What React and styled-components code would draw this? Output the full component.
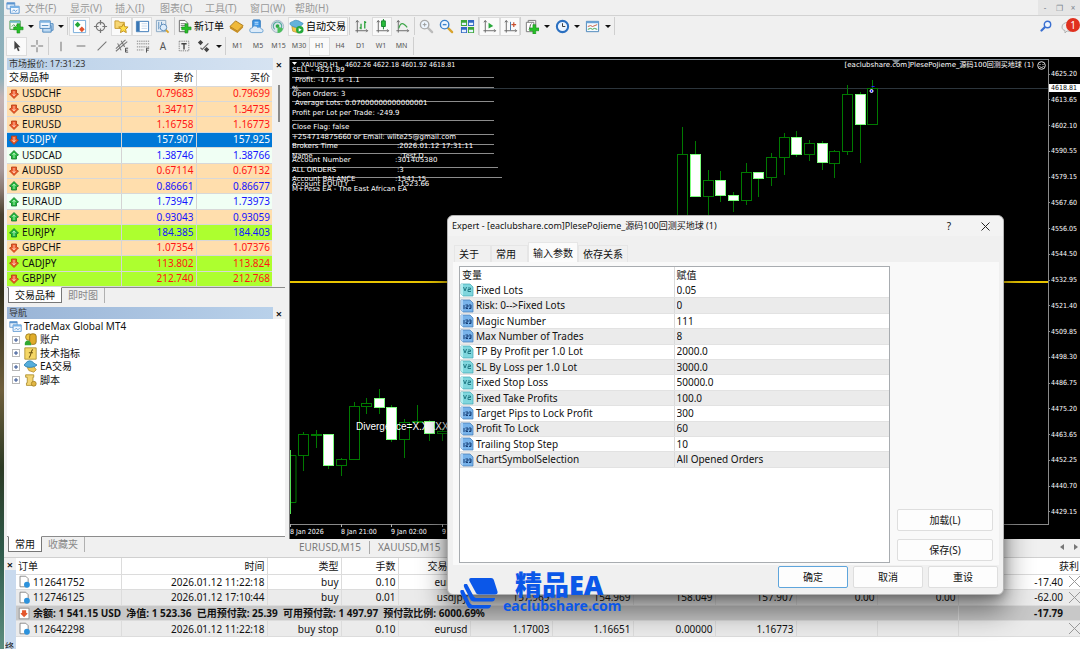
import styled, { createGlobalStyle, css } from "styled-components";

const GlobalStyle = createGlobalStyle`
  * {
    box-sizing: border-box;
  }
  body {
    margin: 0;
    overflow: hidden;
    font-family: "Noto Sans", "Noto Sans CJK SC", sans-serif;
    font-size: 10px;
    line-height: 14px;
    color: #111;
  }
  button, input {
    font: inherit;
    color: inherit;
    margin: 0;
  }
  table {
    border-collapse: collapse;
    table-layout: fixed;
  }
  th, td {
    padding: 0;
    font-weight: 400;
    white-space: nowrap;
    overflow: hidden;
  }
  th {
    height: 16px;
  }
`;

const Desktop = styled.div`
  display: flex;
  position: relative;
  height: 100vh;
  overflow: hidden;
`;

const Wallpaper = styled.div`
  width: 4px;
  flex: none;
  background: linear-gradient(
    #8cb0bb 0%,
    #8fb2bc 12%,
    #c3b3b4 15%,
    #a79a9c 26%,
    #8c7c74 29%,
    #4a4231 33%,
    #33301c 45%,
    #6f5f3c 60%,
    #2c3a24 72%,
    #2e5a4a 85%,
    #5d8e80 100%
  );
`;

const Terminal = styled.main`
  flex: 1;
  min-width: 0;
  display: flex;
  flex-direction: column;
  background: #f0f0f0;
`;

const MenuBar = styled.nav`
  display: flex;
  align-items: center;
  height: 16px;
  padding-left: 2px;
  border-bottom: 1px solid #d2d2d2;
  color: #999;
`;

const Menu = styled.button`
  padding: 0;
  margin-left: 14px;
  width: 31px;
  border: 0;
  background: none;
  white-space: nowrap;
  text-align: left;
  &:first-of-type {
    margin-left: 5px;
  }
`;

const MdiButtons = styled.div`
  display: flex;
  margin-left: auto;
  background: #e5e5e5;
`;

const MdiButton = styled.button`
  width: 14px;
  height: 15px;
  padding: 0;
  border: 0;
  background: none;
  font-size: 8px;
  color: #7d8790;
`;

const Bar = styled.div`
  display: flex;
  align-items: center;
  height: 20px;
  padding-left: 2px;
`;

const barButton = css`
  border: 0;
  background: none;
  padding: 0;
  display: flex;
  align-items: center;
  justify-content: center;
  flex: none;
  height: 19px;
  ${({ $pressed }) =>
    $pressed &&
    css`
      background: #fafafa;
      box-shadow: inset 0 0 0 1px #dcdcdc;
    `}
`;

const Tool = styled.button`
  ${barButton}
  width: ${({ $width }) => $width || 21}px;
  color: #555;
`;

const TextTool = styled.button`
  ${barButton}
  gap: 2px;
  padding: 0 2px 0 1px;
  white-space: nowrap;
  color: #000;
`;

const Period = styled.button`
  ${barButton}
  width: ${({ $wide }) => ($wide ? 21 : 20)}px;
  font-size: 7px;
  color: #555;
`;

const Caret = styled.button`
  ${barButton}
  width: 10px;
  &:before {
    content: "";
    border: 3px solid transparent;
    border-top-color: #111;
    border-bottom: 0;
  }
`;

const Divider = styled.span`
  width: 1px;
  height: 18px;
  margin: 0 ${({ $tight }) => ($tight ? 0 : 1)}px;
  background: #cfcfcf;
`;

const BarEnd = styled.div`
  display: flex;
  align-items: center;
  gap: 9px;
  margin-left: auto;
`;

const Alerts = styled.button`
  position: relative;
  width: 19px;
  height: 20px;
  padding: 5px 0 0 0;
  border: 0;
  background: none;
  text-align: left;
`;

const Badge = styled.span`
  position: absolute;
  top: 2px;
  right: 0;
  width: 14px;
  height: 14px;
  border-radius: 50%;
  background: #e0301e;
  color: #fff;
  font-size: 10px;
  line-height: 14px;
  text-align: center;
`;

const Workspace = styled.div`
  display: flex;
  flex: 1;
  min-height: 0;
`;

const SideColumn = styled.aside`
  width: 285px;
  flex: none;
  display: flex;
  flex-direction: column;
  padding: 2px 4px 4px 3px;
  gap: 3px;
`;

const Panel = styled.section`
  display: flex;
  flex-direction: column;
  flex: ${({ $grow }) => ($grow ? 1 : "none")};
  min-height: 0;
`;

const PanelTitle = styled.h2`
  display: flex;
  justify-content: space-between;
  margin: 0;
  height: 12px;
  font-size: 9px;
  line-height: 12px;
  font-weight: 400;
  span {
    width: 266px;
    padding-left: 2px;
    background: linear-gradient(90deg, ${({ $from }) => $from}, ${({ $to }) => $to});
    color: #333;
  }
`;

const Close = styled.button`
  border: 0;
  padding: 0;
  width: 12px;
  height: 12px;
  background: none;
  font-size: 11px;
  font-weight: 600;
  line-height: 11px;
`;

const Scroller = styled.div`
  display: flex;
  justify-content: space-between;
  border-bottom: 1px solid #8c8c8c;
`;

const Thumb = styled.div`
  width: 2px;
  height: 37px;
  margin: 15px 5px 0 0;
  background: #8b8b8b;
`;

const QuoteTable = styled.table`
  width: 265px;
  height: 217px;
  background: #fff;
  th,
  td {
    text-align: right;
    padding-right: 2px;
    border-right: 1px solid #d4d4d4;
    border-bottom: 1px solid #d8d8d8;
    line-height: 13px;
  }
  th:first-child {
    text-align: left;
    padding-left: 2px;
  }
  th:last-child,
  td:last-child {
    border-right: 0;
  }
`;

const tones = { peach: "#ffdead", mint: "#f0fff4", lime: "#adff2f", blue: "#0078d7" };

const QuoteRow = styled.tr`
  background: ${({ $tone }) => tones[$tone]};
  td {
    color: ${({ $up, $tone }) =>
      $tone === "blue" ? "#fff" : $up ? "#1414ff" : "#ff1414"};
  }
  td:first-child {
    color: ${({ $tone }) => ($tone === "blue" ? "#fff" : "#111")};
    text-align: left;
    padding-left: 2px;
  }
`;

const Cell = styled.span`
  display: flex;
  align-items: center;
  gap: ${({ $gap }) => $gap || 3}px;
`;

const PanelTabs = styled.div`
  display: flex;
  height: 16px;
`;

const PanelTab = styled.button`
  padding: 0 6px;
  height: 15px;
  line-height: 13px;
  border: 0;
  background: none;
  color: #888;
  border-right: 1px solid #b0b0b0;
  ${({ $active }) =>
    $active &&
    css`
      margin-left: 1px;
      background: #fff;
      color: #111;
      border: 1px solid #777;
      border-top-color: #fff;
      margin-top: -1px;
      height: 16px;
    `}
`;

const Tree = styled.div`
  flex: 1;
  padding: 0 2px;
  background: #fff;
  border-bottom: 1px solid #8c8c8c;
`;

const TreeRoot = styled.div`
  display: flex;
  align-items: center;
  gap: 2px;
  height: 14px;
`;

const TreeList = styled.ul`
  list-style: none;
  margin: 0;
  padding: 0 0 0 3px;
  height: 54px;
  display: flex;
  flex-direction: column;
  li {
    flex: 1;
    display: flex;
    align-items: center;
    gap: 3px;
    line-height: 13px;
  }
`;

const Expander = styled.button`
  width: 8px;
  height: 8px;
  padding: 0;
  border: 1px solid #b8b8b8;
  background: #fff;
  display: flex;
  margin-right: 1px;
`;

const ChartColumn = styled.section`
  flex: 1;
  min-width: 0;
  display: flex;
  flex-direction: column;
`;

const ChartWindow = styled.div`
  flex: 1;
  min-height: 0;
  display: flex;
  position: relative;
  margin-top: 1px;
  padding-top: 2px;
  background: #000;
  border-left: 1px solid #777;
  color: #fff;
  font-family: "DejaVu Sans Condensed", "Noto Sans CJK SC", sans-serif;
  font-size: 7px;
  line-height: 8px;
`;

const Plot = styled.div`
  flex: 1;
  min-width: 0;
  border-top: 1px solid #7e8890;
  border-right: 1px solid #8a8a8a;
  border-bottom: 1px solid #8a8a8a;
  margin-bottom: 14px;
  position: relative;
`;

const Canvas = styled.svg`
  display: block;
  width: 100%;
  height: 100%;
  overflow: visible;
  fill: #fff;
`;

const Comments = styled.g`
  font-family: "DejaVu Sans", sans-serif;
`;

const ExpertName = styled.div`
  position: absolute;
  top: 0;
  right: 2px;
  display: flex;
  align-items: center;
  gap: 3px;
  height: 10px;
  font-family: "DejaVu Sans", "Noto Sans CJK SC", sans-serif;
`;

const PriceAxis = styled.ol`
  width: 31px;
  flex: none;
  list-style: none;
  margin: 0;
  padding: 11px 0 23px 0;
  display: flex;
  flex-direction: column;
  justify-content: space-between;
  li {
    display: flex;
    align-items: center;
    gap: 1px;
  }
  li:before {
    content: "";
    width: 1px;
    height: 1px;
    background: #8a8a8a;
  }
`;

const LastPrice = styled.output`
  position: absolute;
  top: 27px;
  right: 0;
  width: 31px;
  padding: 0 2px;
  background: #fff;
  color: #000;
`;

const ChartTabs = styled.div`
  display: flex;
  align-items: center;
  height: 18px;
  padding: 0 0 2px 2px;
  color: #7a7a7a;
`;

const ChartTab = styled.button`
  border: 0;
  border-right: 1px solid #aaa;
  padding: 0 8px;
  height: 13px;
  line-height: 13px;
  background: none;
  &:last-of-type {
    border-right: 0;
  }
`;

const Arrows = styled.span`
  display: flex;
  gap: 10px;
  margin: 0 2px 0 auto;
`;

const TradePanel = styled.section`
  display: flex;
  height: 92px;
  flex: none;
  background: #fff;
  border-top: 1px solid #d0d0d0;
`;

const Rail = styled.div`
  width: 12px;
  flex: none;
  display: flex;
  flex-direction: column;
  background: #f0f0f0;
  span {
    flex: 1;
    margin-left: 1px;
    padding-top: 72px;
    background: #c9daee;
    font-size: 9px;
    line-height: 10px;
    overflow: hidden;
  }
`;

const OrderWrap = styled.div`
  flex: 1;
  min-width: 0;
`;

const OrderTable = styled.table`
  width: 100%;
  height: 79px;
  th,
  td {
    text-align: right;
    padding-right: 2px;
    border-right: 1px solid #dcdcdc;
    border-bottom: 1px solid #dcdcdc;
  }
  th:first-child,
  td:first-child {
    text-align: left;
    padding-left: 2px;
  }
  td:nth-last-child(-n + 2),
  th:last-child {
    border-right: 0;
  }
  th:last-child {
    padding-right: 1px;
  }
`;

const OrderRow = styled.tr`
  background: ${({ $shade }) => $shade || "#fff"};
  font-weight: ${({ $bold }) => ($bold ? 700 : 400)};
  td:nth-last-child(2) {
    padding-right: 3px;
  }
  td {
    font-weight: inherit;
  }
  td:last-child {
    padding-right: 0;
  }
`;

const CloseOrder = styled.button`
  display: flex;
  margin-left: auto;
  padding: 0;
  border: 0;
  background: none;
`;

const Dialog = styled.section`
  position: absolute;
  left: 447px;
  top: 215px;
  width: 557px;
  display: flex;
  flex-direction: column;
  background: #f0f0f0;
  border: 1px solid #b4b4b4;
  border-radius: 6px;
  box-shadow: 0 14px 28px 2px rgba(0, 0, 0, 0.45), 0 2px 10px rgba(0, 0, 0, 0.3);
`;

const DialogTitle = styled.header`
  display: flex;
  align-items: center;
  height: 20px;
  padding: 0 12px 0 4px;
  background: #f3f3f3;
  border-radius: 6px 6px 0 0;
  h1 {
    flex: 1;
    margin: 0;
    font-size: 9px;
    font-weight: 400;
  }
`;

const TitleButton = styled.button`
  display: flex;
  align-items: center;
  justify-content: center;
  width: 12px;
  margin-left: 24px;
  padding: 0;
  border: 0;
  background: none;
`;

const DialogTabs = styled.div`
  display: flex;
  align-items: flex-end;
  height: 26px;
  padding-left: 6px;
`;

const DialogTab = styled.button`
  padding: 0 4px;
  min-width: 37px;
  height: ${({ $active }) => ($active ? 20 : 17)}px;
  border: 1px solid #e6e6e6;
  border-bottom: 0;
  text-align: left;
  background: ${({ $active }) => ($active ? "#fbfbfb" : "#f0f0f0")};
`;

const DialogBody = styled.div`
  display: flex;
  gap: 7px;
  margin: 0 4px 0 5px;
  padding: 4px 6px 2px 6px;
  background: #f9f9f9;
`;

const InputFrame = styled.div`
  flex: 1;
  height: 297px;
  background: #fff;
  border: 1px solid #a8acb0;
`;

const InputTable = styled.table`
  width: 100%;
  height: 201px;
  th,
  td {
    text-align: left;
    line-height: 13px;
    padding-left: 2px;
  }
  th:first-child,
  td:first-child {
    padding-left: 0;
    border-right: 1px solid #dadada;
  }
  th:first-child {
    padding-left: 2px;
  }
  td {
    border-bottom: 1px solid #e2e2e2;
  }
  tbody tr:nth-child(even) {
    background: #ebebeb;
  }
`;

const ValueInput = styled.input`
  display: block;
  width: 100%;
  height: 13px;
  padding: 0;
  border: 0;
  background: none;
`;

const SideActions = styled.div`
  display: flex;
  flex-direction: column;
  justify-content: flex-end;
  gap: 8px;
  width: 96px;
  padding-bottom: 2px;
`;

const Action = styled.button`
  min-width: 70px;
  height: 22px;
  padding: 0;
  border: 1px solid ${({ $primary }) => ($primary ? "#5ea5dc" : "#dedede")};
  border-radius: 2px;
  background: #fdfdfd;
`;

const DialogFooter = styled.footer`
  display: flex;
  justify-content: flex-end;
  gap: 5px;
  padding: 1px 5px 6px;
`;

const Brand = styled.div`
  position: absolute;
  left: 460px;
  top: 571px;
  display: flex;
  align-items: center;
  gap: 5px;
  color: #0b57e8;
  font-weight: 700;
  font-size: 14px;
  line-height: 14px;
  svg {
    margin-top: 2px;
  }
  strong {
    display: block;
    padding-left: 12px;
    font-size: 27px;
    line-height: 28px;
  }
`;

const Svg = ({ size = 15, children }) => (
  <svg width={size} height={size} viewBox="0 0 16 16" fill="none">
    {children}
  </svg>
);

const Plus = ({ x = 5, y = 5 }) => (
  <path
    transform={`translate(${x} ${y})`}
    d="M3.500 0h3v3.500H10v3H6.500V10h-3V6.500H0v-3h3.500z"
    fill="#27c027"
    stroke="#128a16"
    strokeWidth=".6"
  />
);

const Lens = ({ stroke, children }) => (
  <Svg>
    <path d="m9.500 9.500 4.500 4.500" stroke={stroke === "#aaa" ? "#bbb" : "#d9a32c"} strokeWidth="2.400" strokeLinecap="round" />
    <circle cx="6" cy="6" r="4.500" fill="#eef6ff" stroke={stroke} strokeWidth="1.500" />
    {children}
  </Svg>
);

const Axes = ({ children }) => (
  <Svg>
    <path d="M3.500 2v12.500M1.500 12.500h13M2 3.500 3.500 1.500 5 3.500M13 11l1.500 1.500L13 14" stroke="#666" />
    {children}
  </Svg>
);

const WindowsIcon = ({ size }) => (
  <Svg size={size}>
    <path d="M1 2h9v7H1z" fill="#e6f1fc" stroke="#5a94cf" />
    <path d="M1 2h9v2H1z" fill="#5a94cf" />
    <path d="M5 6h10v8H5z" fill="#f2f8ff" stroke="#4c8ccb" />
    <path d="M5 6h10v2H5z" fill="#78b2e6" />
    <path d="m7 12 2-2 2 2 2-2" stroke="#4c8ccb" />
  </Svg>
);

const NewChartIcon = () => (
  <Svg>
    <path d="M1 2h11v9H1z" fill="#f4faf4" stroke="#4b9a4b" />
    <path d="M1 2h11v2H1z" fill="#6db7c7" />
    <path d="m3 8 2-2 2 2 2-2" stroke="#4b9a4b" />
    <Plus />
  </Svg>
);

const ProfilesIcon = () => (
  <Svg>
    <path d="M6 5h9v7H6z" fill="#bcd9f3" stroke="#4c86bd" />
    <path d="M4 7h9v7H4z" fill="#bcd9f3" stroke="#4c86bd" />
    <path d="M1 2h11v8H1z" fill="#eff7ff" stroke="#4c86bd" />
    <path d="M1 2h11v2H1z" fill="#7fb4e2" />
    <path d="M3 7h7" stroke="#4c86bd" />
  </Svg>
);

const MarketIcon = () => (
  <Svg>
    <path d="M1.500 1.500h13v13h-13z" fill="#fff" stroke="#72a9d8" />
    <path d="m6 3 3 3-3 3-3-3z" fill="#22a736" />
    <path d="m10.500 8 3 3-3 3-3-3z" fill="#e2522b" />
  </Svg>
);

const TargetIcon = () => (
  <Svg>
    <circle cx="8" cy="8" r="4.500" stroke="#777" strokeWidth="1.300" />
    <path d="M8 1v5M8 10v5M1 8h5M10 8h5" stroke="#777" strokeWidth="1.300" />
  </Svg>
);

const star = "m10 5 1.500 3.200 3.500.4-2.600 2.400.7 3.500-3.100-1.700-3.100 1.700.7-3.500L5 8.600l3.500-.4z";

const FavoritesIcon = () => (
  <Svg>
    <path d="M1 2h4l1 1.500h5V10H1z" fill="#f7d774" stroke="#c89a2c" />
    <path d={star} fill="#ffdf4a" stroke="#bf8f1d" />
  </Svg>
);

const NavigatorIcon = () => (
  <Svg>
    <path d="M1.500 2.500h13v11h-13z" fill="#fff" stroke="#3976b5" />
    <path d="M2 3h3v10H2z" fill="#3976b5" />
    <path d="M7 5h6M7 7.500h6M7 10h6" stroke="#c5d8ec" />
  </Svg>
);

const TesterIcon = () => (
  <Svg>
    <path d="M1.500 1.500h10v12h-10z" fill="#e4edf6" stroke="#8aa7c2" />
    <path d="M4 3v8M7 3v8" stroke="#5b8dbc" />
    <path d="m11 11 3.500 3.500" stroke="#d9a32c" strokeWidth="2" />
    <circle cx="9" cy="9" r="3.500" fill="#dcecfb" stroke="#5989b8" />
  </Svg>
);

const OrderIcon = () => (
  <Svg>
    <path d="M2.500 1.500h6l3 3v9h-9z" fill="#fff" stroke="#666" />
    <path d="M4 5h5M4 7h5M4 9h3" stroke="#777" />
    <Plus />
  </Svg>
);

const BookIcon = () => (
  <Svg>
    <path d="M1 8 7 2l8 5-6 6z" fill="#efb93a" stroke="#a9771a" />
    <path d="m1 8 8 5v2L1 10zM9 13l6-6v2l-6 6z" fill="#c78e22" />
  </Svg>
);

const CloudServerIcon = () => (
  <Svg>
    <rect x="4" y="1" width="8" height="9" rx="1" fill="#3f98e8" stroke="#2873bb" />
    <path d="M6 3.500h4M6 5.500h4" stroke="#cbe7ff" />
    <path d="M3 14.500a2.500 2.500 0 0 1 .5-5 3 3 0 0 1 5.500-.5 3 3 0 0 1 4 1.500 2 2 0 0 1 0 4z" fill="#dcebf9" stroke="#6ca2d2" />
  </Svg>
);

const SignalIcon = () => (
  <Svg>
    <circle cx="8" cy="8" r="6.500" fill="#dbe4ea" stroke="#9fb3c4" />
    <path d="M5 11a4.500 4.500 0 1 1 6 0" stroke="#55a9a0" strokeWidth="1.200" />
    <circle cx="8" cy="7.500" r="2" fill="#2ea745" />
    <path d="M8 8v7c3 0 5-2 6-5z" fill="#4cbf5c" />
  </Svg>
);

const AutoIcon = () => (
  <Svg>
    <path d="m3 8 1 5 6 2 4-6z" fill="#f2c94b" stroke="#b98d22" strokeWidth=".7" />
    <path d="M1 5c0-2 2-1.500 4-3s6 0 7 1 3 1 3 2-5 4-7 4-7-2-7-4z" fill="#63b3dc" stroke="#3787b4" strokeWidth=".7" />
    <circle cx="11.500" cy="11.500" r="4" fill="#23a83a" />
    <path d="m10.300 9.500 3.200 2-3.200 2z" fill="#fff" />
  </Svg>
);

const TileIcon = () => (
  <Svg>
    <path d="M1 1h6.500v6.500H1zM8.500 8.500H15V15H8.500z" fill="#3aa636" />
    <path d="M8.500 1H15v6.500H8.500zM1 8.500h6.500V15H1z" fill="#3268c4" />
    <path d="M2 4h4.500v2.500H2zM9.500 4H14v2.500H9.500zM2 11.500h4.500V14H2zM9.500 11.500H14V14H9.500z" fill="#e7f2ff" />
  </Svg>
);

const IndicatorsIcon = () => (
  <Svg>
    <path d="M4.500 1.500h8v11h-8z" fill="#fff" stroke="#777" />
    <path d="M2.500 3.500h8v10h-8z" fill="#fff" stroke="#777" />
    <path d="M5 11c2 0 1-6 3-6" stroke="#555" />
    <Plus x={6} y={6} />
  </Svg>
);

const ClockIcon = () => (
  <Svg>
    <circle cx="8" cy="8" r="6" fill="#eaf4ff" stroke="#2a6fc0" strokeWidth="2.200" />
    <path d="M8 4.500V8h3" stroke="#333" />
  </Svg>
);

const TemplateIcon = () => (
  <Svg>
    <path d="M1.500 2.500h13v11h-13z" fill="#f4faff" stroke="#4a84ba" />
    <path d="M1.500 2.500h13v2h-13z" fill="#6aa3d6" />
    <path d="m3 8 3-1 2 1 5-2" stroke="#c65b3b" />
    <path d="m3 11 3-1 2 1 2-1 3 1" stroke="#3ba045" />
  </Svg>
);

const CursorIcon = () => (
  <Svg size={14}>
    <path d="M5 2v10l2.400-2 1.800 4 1.800-.8-1.800-3.900H12z" fill="#444" />
  </Svg>
);

const Stroke = ({ d, children }) => (
  <Svg size={14}>
    <path d={d} stroke="#777" strokeWidth="1.200" />
    {children}
  </Svg>
);

const MoveIcon = ({ up }) => (
  <svg width="10" height="10" viewBox="0 0 10 10">
    <path
      d={up ? "M5 .5 9.500 5 7.500 6v3h-5V6L.5 5z" : "M5 9.500.5 5l2-1V1h5v3l2 1z"}
      fill={up ? "#22b83c" : "#ec5a2c"}
      stroke={up ? "#12752a" : "#b33c12"}
      strokeWidth=".8"
    />
    <path d={up ? "M5 3v5M3.500 5 5 3l1.500 2" : "M5 2v5M3.500 5 5 7l1.500-2"} stroke={up ? "#b6f0bd" : "#ffd0b5"} fill="none" strokeWidth=".9" />
  </svg>
);

const PageIcon = () => (
  <Svg size={13}>
    <path d="M2.500 1.500h7l3 3v10h-10z" fill="#fff" stroke="#777" />
    <circle cx="11" cy="12" r="3.600" fill="#2c92dc" />
  </Svg>
);

const BalanceIcon = () => (
  <Svg size={13}>
    <path d="M1.500 1.500h12v13h-12z" fill="#fff" stroke="#888" />
    <path d="M7.500 12.500 3 8l2-1V4h5v3l2 1z" fill="#e4572c" />
  </Svg>
);

const ParamIcon = ({ real }) => (
  <svg width="14" height="14" viewBox="0 0 14 14">
    <path d="M1 1h9l3 3v9H3l-2-2z" fill={real ? "#7fd6dd" : "#78b3ea"} stroke={real ? "#3fa7b2" : "#3f78b5"} strokeWidth=".7" />
    <path d="M1 1h2v12L1 11z" fill={real ? "#b2edf0" : "#a9d0f5"} />
    {real ? (
      <path d="m3.500 4 1.500 4 1.500-4M8 5h2.500v1.500H8V8.500h3" fill="none" stroke="#237b86" />
    ) : (
      <path d="M4 6v4M5.500 6H8v2H6v1.500h2M9 6h2v3.500H9M9.500 8H11" fill="none" stroke="#173f77" />
    )}
  </svg>
);

const treeIcons = {
  accounts: (
    <Svg size={13}>
      <circle cx="6" cy="5" r="4" fill="#efc844" stroke="#94731b" />
      <rect x="7" y="1" width="8" height="13" rx="3" fill="#e0ac2a" stroke="#8e6b15" />
      <path d="M1 15c-1-7 7-8 8 0z" fill="#31a932" />
    </Svg>
  ),
  indicators: (
    <Svg size={13}>
      <path d="M1 1h14v14H1z" fill="#f5d767" stroke="#a98a2a" />
      <path d="M6 13c3-1 2-9 5-10M6 7h5" stroke="#6e5612" strokeWidth="1.300" />
    </Svg>
  ),
  experts: (
    <Svg size={13}>
      <path d="m4 9 8-1 3 4-3 3-6-2z" fill="#efc95a" stroke="#b58d2b" />
      <path d="M0 6c2-1 3-5 7-5s5 4 9 5c-2 3-13 5-16 0z" fill="#55aedc" stroke="#2d7eac" />
    </Svg>
  ),
  scripts: (
    <Svg size={13}>
      <path d="M2 1h10v3h-1v7h3v3H3v-3h1V4H2z" fill="#f3d573" stroke="#a98a2a" />
      <circle cx="12" cy="12" r="3" fill="#e0b544" stroke="#a5801f" />
    </Svg>
  ),
};

const menus = ["文件(F)", "显示(V)", "插入(I)", "图表(C)", "工具(T)", "窗口(W)", "帮助(H)"];
const periods = ["M1", "M5", "M15", "M30", "H1", "H4", "D1", "W1", "MN"];

const quotes = [
  ["USDCHF", "0.79683", "0.79699", false, "peach"],
  ["GBPUSD", "1.34717", "1.34735", false, "peach"],
  ["EURUSD", "1.16758", "1.16773", false, "peach"],
  ["USDJPY", "157.907", "157.925", false, "blue"],
  ["USDCAD", "1.38746", "1.38766", true, "mint"],
  ["AUDUSD", "0.67114", "0.67132", false, "peach"],
  ["EURGBP", "0.86661", "0.86677", true, "peach"],
  ["EURAUD", "1.73947", "1.73973", true, "mint"],
  ["EURCHF", "0.93043", "0.93059", true, "peach"],
  ["EURJPY", "184.385", "184.403", true, "lime"],
  ["GBPCHF", "1.07354", "1.07376", false, "peach"],
  ["CADJPY", "113.802", "113.824", false, "lime"],
  ["GBPJPY", "212.740", "212.768", false, "lime"],
];

const prices = [
  "4625.20", "4613.65", "4602.10", "4590.55", "4579.15", "4567.60",
  "4556.05", "4544.50", "4532.95", "4521.40", "4509.85", "4498.30",
  "4486.75", "4475.20", "4463.65", "4452.25", "4440.70", "4429.15",
];

// x of the wick, high, open/close top, open/close bottom, low, bearish
const candles = [
  [13, 372, 374, 395, 411, false],
  [26, 370, 374, 375, 388, false],
  [38, 374, 374, 405, 409, true],
  [51, 398, 399, 405, 416, false],
  [64, 342, 346, 399, 400, false],
  [76, 338, 343, 346, 354, false],
  [89, 329, 338, 347, 354, true],
  [101, 345, 347, 379, 382, true],
  [114, 359, 362, 379, 398, false],
  [127, 345, 361, 362, 363, false],
  [139, 360, 361, 373, 381, true],
  [152, 368, 371, 373, 381, false],
  [392, 67, 94, 190, 190, false],
  [405, 81, 94, 136, 137, true],
  [418, 110, 120, 136, 180, false],
  [430, 111, 120, 135, 142, true],
  [443, 132, 135, 140, 152, true],
  [456, 103, 112, 140, 145, false],
  [468, 112, 112, 118, 137, true],
  [481, 93, 97, 117, 126, false],
  [494, 73, 77, 97, 115, false],
  [506, 71, 77, 94, 97, true],
  [519, 80, 83, 94, 101, false],
  [532, 81, 83, 102, 110, true],
  [544, 90, 91, 103, 118, false],
  [557, 25, 34, 91, 95, false],
  [570, 32, 34, 64, 103, true],
  [582, 20, 28, 64, 65, false],
];

const comments = [
  [2, 12, "SELL - 4531.89"],
  [5, 22, "Profit: -17.5 is -1.1"],
  [2, 31, "%."],
  [2, 36, "Open Orders: 3"],
  [5, 45, "Average Lots: 0.07000000000000001"],
  [2, 55, "Profit per Lot per Trade: -249.9"],
  [2, 69, "Close Flag: false"],
  [2, 79, "+254714875660 or Email: wlite25@gmail.com"],
  [2, 88, "Brokers Time"],
  [107, 88, ":2026.01.12 17:31:11"],
  [2, 98, "Name"],
  [110, 98, ":Test D."],
  [2, 102, "Account Number"],
  [105, 102, ":301405380"],
  [2, 112, "ALL ORDERS"],
  [107, 112, ":3"],
  [2, 121, "Account BALANCE"],
  [105, 121, ":1541.15"],
  [2, 126, "Account EQUITY"],
  [108, 126, ":1523.66"],
  [2, 131, "M+Pesa EA - The East African EA"],
];

const rules = [
  [17, 204], [27, 204], [41, 204], [60, 204], [74, 204],
  [84, 204], [93, 204], [107, 208], [117, 212],
];

const params = [
  ["Fixed Lots", "0.05", true],
  ["Risk: 0-->Fixed Lots", "0", false],
  ["Magic Number", "111", false],
  ["Max Number of Trades", "8", false],
  ["TP By Profit per 1.0 Lot", "2000.0", true],
  ["SL By Loss per 1.0 Lot", "3000.0", true],
  ["Fixed Stop Loss", "50000.0", true],
  ["Fixed Take Profits", "100.0", true],
  ["Target Pips to Lock Profit", "300", false],
  ["Profit To Lock", "60", false],
  ["Trailing Stop Step", "10", false],
  ["ChartSymbolSelection", "All Opened Orders", false],
];

const orderColumns = [105, 146, 74, 57, 72, 82, 81, 82, 81, 81, 81];

const MainToolbar = () => (
  <Bar>
    <Tool $width={20} aria-label="New chart"><NewChartIcon /></Tool>
    <Caret aria-label="New chart list" />
    <Tool $width={20} aria-label="Profiles"><ProfilesIcon /></Tool>
    <Caret aria-label="Profile list" />
    <Divider />
    <Tool $pressed aria-label="Market watch"><MarketIcon /></Tool>
    <Tool aria-label="Data window"><TargetIcon /></Tool>
    <Tool $pressed aria-label="Favorites"><FavoritesIcon /></Tool>
    <Tool $pressed $width={20} aria-label="Navigator"><NavigatorIcon /></Tool>
    <Tool aria-label="Strategy tester"><TesterIcon /></Tool>
    <Divider />
    <TextTool><OrderIcon />新订单</TextTool>
    <Tool $width={20} aria-label="Editor"><BookIcon /></Tool>
    <Tool aria-label="Hosting"><CloudServerIcon /></Tool>
    <Tool aria-label="Signals"><SignalIcon /></Tool>
    <TextTool $pressed><AutoIcon />自动交易</TextTool>
    <Divider />
    <Tool aria-label="Bar chart">
      <Axes><path d="M7.500 5v6M6 9.500h1.500M11.500 2v8M11.500 3.500H13" stroke="#1d9c2e" strokeWidth="1.300" /></Axes>
    </Tool>
    <Tool $pressed $width={20} aria-label="Candlesticks">
      <Axes><path d="M9 0v11" stroke="#12832a" /><path d="M7 2h4v6H7z" fill="#29bd3b" stroke="#12832a" /></Axes>
    </Tool>
    <Tool aria-label="Line chart">
      <Axes><path d="M4 10c2-7 5-6 9-1" stroke="#3ea64a" strokeWidth="1.300" /></Axes>
    </Tool>
    <Divider />
    <Tool $width={20} aria-label="Zoom in">
      <Lens stroke="#aaa"><path d="M4 6h4M6 4v4" stroke="#999" /></Lens>
    </Tool>
    <Tool aria-label="Zoom out">
      <Lens stroke="#3b82cb"><path d="M4 6h4" stroke="#3b82cb" strokeWidth="1.500" /></Lens>
    </Tool>
    <Tool aria-label="Tile windows"><TileIcon /></Tool>
    <Divider $tight />
    <Tool $pressed aria-label="Auto scroll">
      <Axes><path d="m7 4 5 3.500L7 10z" fill="#28a83a" /></Axes>
    </Tool>
    <Tool $pressed $width={20} aria-label="Chart shift">
      <Axes><path d="M8 3v9" stroke="#4474a8" /><path d="M9 6h5M11.500 3.500v5" stroke="#c9502e" strokeWidth="1.300" /></Axes>
    </Tool>
    <Divider $tight />
    <Tool aria-label="Indicators"><IndicatorsIcon /></Tool>
    <Caret aria-label="Indicator list" />
    <Tool $width={20} aria-label="Periods"><ClockIcon /></Tool>
    <Caret aria-label="Period list" />
    <Tool aria-label="Templates"><TemplateIcon /></Tool>
    <Caret aria-label="Template list" />
    <Divider />
    <BarEnd>
      <svg width="12" height="12" viewBox="0 0 12 12" fill="none">
        <path d="M5.500 6.500 1.500 10.500" stroke="#3a6fd0" strokeWidth="2.200" strokeLinecap="round" />
        <circle cx="7.500" cy="4.500" r="3.200" fill="#eef5ff" stroke="#3a6fd0" strokeWidth="1.400" />
      </svg>
      <Alerts aria-label="Messages">
        <svg width="13" height="13" viewBox="0 0 13 13">
          <path d="M1 6c0-6 11-6 11 0s-5 4-6 4l-2 2V9.500C2 9 1 8 1 6z" fill="#eee" stroke="#b0b0b0" />
        </svg>
        <Badge>1</Badge>
      </Alerts>
    </BarEnd>
  </Bar>
);

const DrawingToolbar = () => (
  <Bar>
    <Tool $pressed aria-label="Cursor"><CursorIcon /></Tool>
    <Tool $width={20} aria-label="Crosshair">
      <Stroke d="M8 1v5.500M8 9.500V15M1 8h5.500M9.500 8H15" />
    </Tool>
    <Divider />
    <Tool aria-label="Vertical line"><Stroke d="M8 3v11" /></Tool>
    <Tool $width={20} aria-label="Horizontal line"><Stroke d="M3 8h10" /></Tool>
    <Tool aria-label="Trend line"><Stroke d="M3 13 13 3" /></Tool>
    <Tool $width={20} aria-label="Channel">
      <Stroke d="M1 11 12 1M1 14 14 3M3 5l4 8M7 2l4 7">
        <path d="M15 10.500h-3v4.500h3M12 12.800h2.500" stroke="#444" />
      </Stroke>
    </Tool>
    <Tool aria-label="Fibonacci">
      <Svg size={14}>
        <path d="M1 2.500h14M1 5.500h14M1 9h14M1 12.500h8" stroke="#777" strokeDasharray="1.500 1" />
        <path d="M15 10.500h-3V15.500M12 12.800h2.500" stroke="#444" />
      </Svg>
    </Tool>
    <Tool $width={20} aria-label="Text">A</Tool>
    <Tool aria-label="Text label">
      <Svg size={14}>
        <path d="M2.500 2.500h11v11h-11z" stroke="#777" strokeDasharray="1.500 1" />
        <path d="M5 5.500h6M8 5.500V12" stroke="#444" strokeWidth="1.600" />
      </Svg>
    </Tool>
    <Tool $width={20} aria-label="Arrows">
      <Svg size={14}>
        <path d="m4 1 3 3-3 3-3-3zM11 9l3 3-3 3-3-3z" fill="#444" />
        <path d="m4 10 2 2 7-7" stroke="#666" strokeWidth="1.300" />
      </Svg>
    </Tool>
    <Caret aria-label="Arrow list" />
    <Divider />
    {periods.map((p, i) => (
      <Period key={p} $pressed={p === "H1"} $wide={i % 2 === 0}>{p}</Period>
    ))}
    <Divider />
  </Bar>
);

const MarketWatch = () => (
  <Panel>
    <PanelTitle $from="#b9d0e8" $to="#d6e3f2">
      <span>市场报价: 17:31:23</span>
      <Close aria-label="Close market watch">×</Close>
    </PanelTitle>
    <Scroller>
      <QuoteTable>
        <colgroup>
          <col width="114" />
          <col width="75" />
          <col />
        </colgroup>
        <thead>
          <tr><th>交易品种</th><th>卖价</th><th>买价</th></tr>
        </thead>
        <tbody>
          {quotes.map(([symbol, bid, ask, up, tone]) => (
            <QuoteRow key={symbol} $up={up} $tone={tone}>
              <td><Cell><MoveIcon up={up} />{symbol}</Cell></td>
              <td>{bid}</td>
              <td>{ask}</td>
            </QuoteRow>
          ))}
        </tbody>
      </QuoteTable>
      <Thumb />
    </Scroller>
    <PanelTabs>
      <PanelTab $active>交易品种</PanelTab>
      <PanelTab>即时图</PanelTab>
    </PanelTabs>
  </Panel>
);

const Navigator = () => (
  <Panel $grow>
    <PanelTitle $from="#99b4d6" $to="#b9d1ea">
      <span>导航</span>
      <Close aria-label="Close navigator">×</Close>
    </PanelTitle>
    <Tree>
      <TreeRoot><WindowsIcon size={13} />TradeMax Global MT4</TreeRoot>
      <TreeList>
        {[["accounts", "账户"], ["indicators", "技术指标"], ["experts", "EA交易"], ["scripts", "脚本"]].map(
          ([icon, label]) => (
            <li key={icon}>
              <Expander aria-label={label}>
                <svg width="6" height="6" viewBox="0 0 6 6">
                  <path d="M1 3h4M3 1v4" stroke="#2f4f8f" />
                </svg>
              </Expander>
              {treeIcons[icon]}
              {label}
            </li>
          )
        )}
      </TreeList>
    </Tree>
    <PanelTabs>
      <PanelTab $active>常用</PanelTab>
      <PanelTab>收藏夹</PanelTab>
    </PanelTabs>
  </Panel>
);

const Candle = ({ candle: [x, high, top, bottom, low, bear] }) => (
  <g stroke={bear ? "#7dff7d" : "#007a00"} shapeRendering="crispEdges">
    <path d={`M${x + 0.5} ${high}V${top}M${x + 0.5} ${bottom}V${low}`} stroke="#007a00" />
    <rect x={x - 4.5} y={top + 0.5} width="10" height={bottom - top} fill={bear ? "#fff" : "#000"} />
  </g>
);

const Chart = () => (
  <ChartColumn>
    <ChartWindow>
      <Plot>
        <Canvas>
          <path d="M0 28.500H758" stroke="#2c353c" />
          <path d="M0 222H758" stroke="#e8c400" strokeWidth="2" />
          <path d="M0 395.500h6v47H0" stroke="#007a00" fill="none" />
          <path d="M.5 390v64" stroke="#55e055" />
          {candles.map((c) => (
            <Candle key={c[0]} candle={c} />
          ))}
          <text x="66" y="370" fontSize="10" fontFamily="Liberation Sans, sans-serif">
            Divergence=X.XXXX
          </text>
          <path d="M583 26v8" stroke="#2222ff" strokeWidth="3" strokeDasharray="1 7" />
          <circle cx="581.500" cy="31" r="1.500" fill="#1a1aff" stroke="#fff" />
          <path d="M602 0h8l-4 4z" fill="#7e8890" />
          {rules.map(([y, x]) => (
            <path key={y} d={`M2 ${y + 0.5}H${x}`} stroke="#8c8c8c" />
          ))}
          <path d="M2 2h5L4.500 5z" />
          <text x="11" y="7">XAUUSD,H1</text>
          <text x="55" y="7">4602.26 4622.18 4601.92 4618.81</text>
          <Comments>
            {comments.map(([x, y, text]) => (
              <text key={text} x={x} y={y}>{text}</text>
            ))}
          </Comments>
          <path d="M.5 464v3M51.500 464v3M101.500 464v3M152.500 464v3" stroke="#aaa" />
          <text x="0" y="474">8 Jan 2026</text>
          <text x="51" y="474">8 Jan 21:00</text>
          <text x="101" y="474">9 Jan 02:00</text>
          <text x="152" y="474">9 Jan 07:00</text>
        </Canvas>
        <ExpertName>
          [eaclubshare.com]PlesePoJieme_源码100回测买地球 (1)
          <svg width="9" height="9" viewBox="0 0 9 9" fill="none" stroke="#ddd">
            <circle cx="4.500" cy="4.500" r="3.800" />
            <path d="M2.500 5.200c1 1.800 3 1.800 4 0M3 3v1M6 3v1" />
          </svg>
        </ExpertName>
      </Plot>
      <PriceAxis>
        {prices.map((p) => (
          <li key={p}>{p}</li>
        ))}
      </PriceAxis>
      <LastPrice>4618.81</LastPrice>
    </ChartWindow>
    <ChartTabs>
      <ChartTab>EURUSD,M15</ChartTab>
      <ChartTab>XAUUSD,M15</ChartTab>
      <Arrows>
        <svg width="4" height="6" viewBox="0 0 4 6"><path d="M4 0v6L0 3z" fill="#777" /></svg>
        <svg width="4" height="6" viewBox="0 0 4 6"><path d="M0 0v6l4-3z" fill="#777" /></svg>
      </Arrows>
    </ChartTabs>
  </ChartColumn>
);

const Order = ({ cells, profit, shade }) => (
  <OrderRow $shade={shade}>
    <td><Cell $gap={2}><PageIcon />{cells[0]}</Cell></td>
    {orderColumns.slice(1).map((_, i) => (
      <td key={i}>{cells[i + 1]}</td>
    ))}
    <td>{profit}</td>
    <td>
      <CloseOrder aria-label={`Close ${cells[0]}`}>
        <svg width="11" height="11" viewBox="0 0 11 11">
          <path d="m0 0 11 11M11 0 0 11" stroke="#999" />
        </svg>
      </CloseOrder>
    </td>
  </OrderRow>
);

const Orders = () => (
  <TradePanel>
    <Rail>
      <Close aria-label="Close terminal">×</Close>
      <span>终端</span>
    </Rail>
    <OrderWrap>
      <OrderTable>
        <colgroup>
          {orderColumns.map((w, i) => (
            <col key={i} width={w} />
          ))}
          <col />
          <col width="14" />
        </colgroup>
        <thead>
          <tr>
            <th>订单</th>
            <th>时间</th>
            <th>类型</th>
            <th>手数</th>
            <th>交易品种</th>
            <th>价格</th>
            <th>止损</th>
            <th>止盈</th>
            <th>价格</th>
            <th>手续费</th>
            <th>库存费</th>
            <th colSpan="2">获利</th>
          </tr>
        </thead>
        <tbody>
          <Order cells={["112641752", "2026.01.12 11:22:18", "buy", "0.10", "eurusd"]} profit="-17.40" />
          <Order
            cells={["112746125", "2026.01.12 17:10:44", "buy", "0.01", "usdjpy", "157.969", "154.969", "158.049", "157.907", "0.00", "0.00"]}
            profit="-62.00"
            shade="#ebebeb"
          />
          <OrderRow $shade="#c8c8c8" $bold>
            <td colSpan="11">
              <Cell $gap={2}>
                <BalanceIcon />
                余额: 1 541.15 USD &nbsp;净值: 1 523.36 &nbsp;已用预付款: 25.39 &nbsp;可用预付款: 1 497.97 &nbsp;预付款比例: 6000.69%
              </Cell>
            </td>
            <td>-17.79</td>
            <td />
          </OrderRow>
          <Order
            cells={["112642298", "2026.01.12 11:22:18", "buy stop", "0.10", "eurusd", "1.17003", "1.16651", "0.00000", "1.16773"]}
            profit=""
            shade="#ebebeb"
          />
        </tbody>
      </OrderTable>
    </OrderWrap>
  </TradePanel>
);

const ExpertDialog = () => (
  <Dialog role="dialog" aria-labelledby="expert-title">
    <DialogTitle>
      <h1 id="expert-title">Expert - [eaclubshare.com]PlesePoJieme_源码100回测买地球 (1)</h1>
      <TitleButton aria-label="Help">?</TitleButton>
      <TitleButton aria-label="Close">
        <svg width="9" height="9" viewBox="0 0 9 9">
          <path d="m.5.5 8 8M8.500.5l-8 8" stroke="#222" />
        </svg>
      </TitleButton>
    </DialogTitle>
    <DialogTabs>
      <DialogTab>关于</DialogTab>
      <DialogTab>常用</DialogTab>
      <DialogTab $active>输入参数</DialogTab>
      <DialogTab>依存关系</DialogTab>
    </DialogTabs>
    <DialogBody>
      <InputFrame>
        <InputTable>
          <colgroup>
            <col width="214" />
            <col />
          </colgroup>
          <thead>
            <tr><th>变量</th><th>赋值</th></tr>
          </thead>
          <tbody>
            {params.map(([name, value, real], i) => (
              <tr key={name}>
                <td>
                  <Cell as="label" htmlFor={`param-${i}`} $gap={2}><ParamIcon real={real} />{name}</Cell>
                </td>
                <td><ValueInput id={`param-${i}`} defaultValue={value} /></td>
              </tr>
            ))}
          </tbody>
        </InputTable>
      </InputFrame>
      <SideActions>
        <Action>加载(L)</Action>
        <Action>保存(S)</Action>
      </SideActions>
    </DialogBody>
    <DialogFooter>
      <Action $primary>确定</Action>
      <Action>取消</Action>
      <Action>重设</Action>
    </DialogFooter>
  </Dialog>
);

const App = () => (
  <Desktop>
    <GlobalStyle />
    <Wallpaper />
    <Terminal>
      <MenuBar>
        <WindowsIcon size={14} />
        {menus.map((m) => (
          <Menu key={m}>{m}</Menu>
        ))}
        <MdiButtons>
          <MdiButton aria-label="Minimize">-</MdiButton>
          <MdiButton aria-label="Restore">❐</MdiButton>
          <MdiButton aria-label="Close chart">×</MdiButton>
        </MdiButtons>
      </MenuBar>
      <MainToolbar />
      <DrawingToolbar />
      <Workspace>
        <SideColumn>
          <MarketWatch />
          <Navigator />
        </SideColumn>
        <Chart />
      </Workspace>
      <Orders />
    </Terminal>
    <ExpertDialog />
    <Brand>
      <svg width="38" height="32" viewBox="0 0 38 32" fill="#0b57e8">
        <path d="M11 1h20c2 0 2.500 1 3 2.500l3.500 11c.5 2-.5 3-2.500 3H19c-2 0-3-1-3.500-2.500L9.500 4c-.7-2 0-3 1.500-3z" />
        <path d="M5 7h2l6.500 12c.8 1.500 2 2 3.500 2h18c0 2.500-1.500 3.500-3 3.500H14c-2 0-3-1-3.500-2L4.500 11C3.500 9 3.500 7 5 7z" />
        <path d="M1.500 13h2L10 26c.8 1.500 2 2 3.500 2H31c0 2-1.500 3.500-3 3.500H11c-2 0-3-1-3.500-2L1 17c-1-2-1-4 .5-4z" />
      </svg>
      <div>
        <strong>精品EA</strong>
        eaclubshare.com
      </div>
    </Brand>
  </Desktop>
);

export default App;
